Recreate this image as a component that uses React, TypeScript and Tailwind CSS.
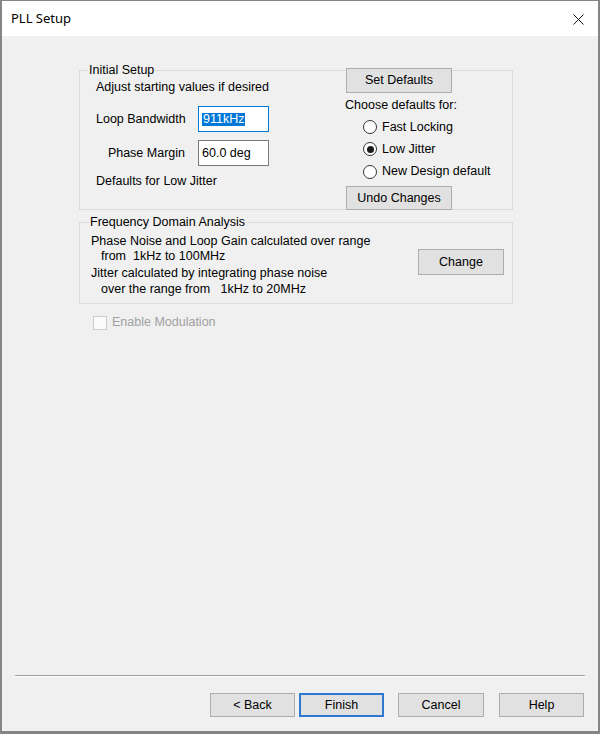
import React from 'react';

const font = { fontFamily: '"Liberation Sans", Arial, sans-serif' };

const Button = ({ label, w, h = 'h-[24px]', focused = false }: { label: string; w: string; h?: string; focused?: boolean }) => (
  <div
    className={`${w} ${h} flex items-center justify-center bg-[#e1e1e1] text-[12.5px] text-black ${
      focused ? 'border-2 border-[#2f78cf]' : 'border border-[#adadad]'
    }`}
  >
    {label}
  </div>
);

const Radio = ({ label, checked = false, h = 'h-[22px]' }: { label: string; checked?: boolean; h?: string }) => (
  <div className={`${h} flex items-center gap-[5px] ml-[17px]`}>
    <div className="w-[14px] h-[14px] rounded-full border border-[#333] bg-white flex items-center justify-center">
      {checked && <div className="w-[7px] h-[7px] rounded-full bg-[#1a1a1a]" />}
    </div>
    <span>{label}</span>
  </div>
);

const App: React.FC = () => {
  return (
    <div
      className="w-[600px] h-[734px] flex flex-col bg-[#f0f0f0] border-t border-l-2 border-r-2 border-b-[3px] border-[#858585] text-[12.5px] text-black leading-[15px]"
      style={font}
    >
      {/* title bar */}
      <div className="h-[35px] bg-white flex items-center justify-between pl-[9px] pr-[14px] shrink-0">
        <span className="text-[13px] text-black" style={{ fontFamily: '"Noto Sans", "Open Sans", sans-serif' }}>
          PLL Setup
        </span>
        <svg width="11" height="11" viewBox="0 0 11 11" className="mt-[1px]">
          <path d="M0.5 0.5 L10.5 10.5 M10.5 0.5 L0.5 10.5" stroke="#111" strokeWidth="1" />
        </svg>
      </div>

      {/* body */}
      <div className="flex-1 flex flex-col pl-[77px]">
        <fieldset className="mt-[27px] w-[434px] h-[147px] border border-[#dcdcdc]">
          <legend className="ml-[8px] px-[1px] leading-[14px]">Initial Setup</legend>
          <div className="flex pt-[3px]">
            <div className="w-[266px] pl-[16px]">
              <div>Adjust starting values if desired</div>
              <div className="flex items-center mt-[11px]">
                <span className="w-[90px]">Loop Bandwidth</span>
                <div className="ml-[12px] w-[71px] h-[26px] border border-[#0078d7] bg-white flex items-center pl-[3px]">
                  <span className="bg-[#0078d7] text-white px-px leading-[13px]">911kHz</span>
                </div>
              </div>
              <div className="flex items-center mt-[8px]">
                <span className="w-[90px] text-right pr-[1px]">Phase Margin</span>
                <div className="ml-[12px] w-[71px] h-[26px] border border-[#7a7a7a] bg-white flex items-center pl-[3px]">
                  60.0 deg
                </div>
              </div>
              <div className="mt-[8px]">Defaults for Low Jitter</div>
            </div>
            <div className="flex flex-col">
              <div className="-mt-[12px]">
                <Button label="Set Defaults" w="w-[106px]" h="h-[25px]" />
              </div>
              <div className="mt-[5px] -ml-px">Choose defaults for:</div>
              <div className="mt-[3px]">
                <Radio label="Fast Locking" />
                <Radio label="Low Jitter" checked />
                <Radio label="New Design default" h="h-[23px]" />
              </div>
              <div className="mt-[3px]">
                <Button label="Undo Changes" w="w-[106px]" />
              </div>
            </div>
          </div>
        </fieldset>

        <fieldset className="mt-[5px] w-[434px] h-[89px] border border-[#dcdcdc]">
          <legend className="ml-[9px] px-[1px] leading-[14px]">Frequency Domain Analysis</legend>
          <div className="flex justify-between pt-[5px] pl-[11px] pr-[8px]">
            <div>
              <div>Phase Noise and Loop Gain calculated over range</div>
              <div className="pl-[10px]">from&nbsp;&nbsp;1kHz to 100MHz</div>
              <div className="mt-[2px]">Jitter calculated by integrating phase noise</div>
              <div className="mt-[1px] pl-[10px]">over the range from&nbsp;&nbsp;&nbsp;1kHz to 20MHz</div>
            </div>
            <div className="mt-[15px]">
              <Button label="Change" w="w-[86px]" h="h-[26px]" />
            </div>
          </div>
        </fieldset>

        <div className="mt-[11px] ml-[14px] flex items-center gap-[5px] text-[#a0a0a0]">
          <div className="w-[14px] h-[14px] border border-[#cccccc] bg-[#fbfbfb]" />
          <span>Enable Modulation</span>
        </div>
      </div>

      {/* footer */}
      <div className="shrink-0">
        <div className="mx-[13px] border-t border-[#a0a0a0] border-b border-b-white" />
        <div className="flex justify-end pr-[14px] mt-[16px] mb-[14px]">
          <Button label="< Back" w="w-[85px]" />
          <div className="ml-[4px]">
            <Button label="Finish" w="w-[85px]" focused />
          </div>
          <div className="ml-[14px]">
            <Button label="Cancel" w="w-[86px]" />
          </div>
          <div className="ml-[15px]">
            <Button label="Help" w="w-[85px]" />
          </div>
        </div>
      </div>
    </div>
  );
};

export default App;
